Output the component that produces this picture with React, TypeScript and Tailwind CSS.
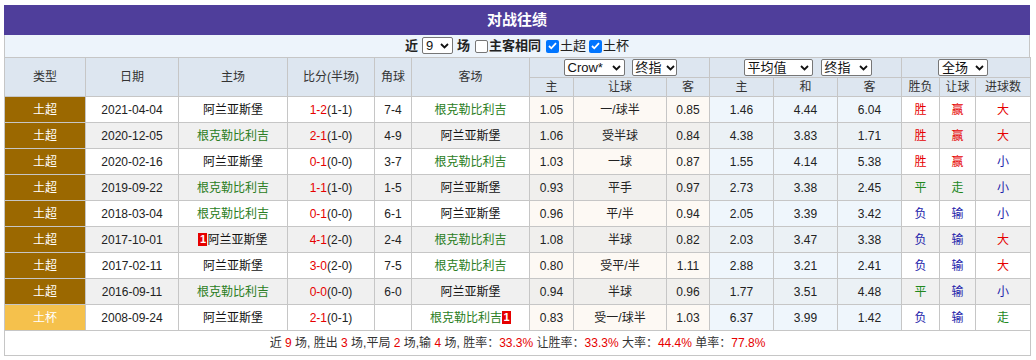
import React from "react";

type Row = {
  type: string;
  date: string;
  home: string;
  homeGreen: boolean;
  homeCard?: boolean;
  score: string;
  half: string;
  corner: string;
  away: string;
  awayCard?: boolean;
  o: [string, string, string];
  a: [string, string, string];
  res: [string, string, string];
};

const A = "阿兰亚斯堡";
const G = "根克勒比利吉";

const rows: Row[] = [
  { type: "土超", date: "2021-04-04", home: A, homeGreen: false, score: "1-2", half: "(1-1)", corner: "7-4", away: G, o: ["1.05", "一/球半", "0.85"], a: ["1.46", "4.44", "6.04"], res: ["胜", "赢", "大"] },
  { type: "土超", date: "2020-12-05", home: G, homeGreen: true, score: "2-1", half: "(1-0)", corner: "4-9", away: A, o: ["1.06", "受半球", "0.84"], a: ["4.38", "3.83", "1.71"], res: ["胜", "赢", "大"] },
  { type: "土超", date: "2020-02-16", home: A, homeGreen: false, score: "0-1", half: "(0-0)", corner: "3-7", away: G, o: ["1.03", "一球", "0.87"], a: ["1.55", "4.14", "5.38"], res: ["胜", "赢", "小"] },
  { type: "土超", date: "2019-09-22", home: G, homeGreen: true, score: "1-1", half: "(1-0)", corner: "1-5", away: A, o: ["0.93", "平手", "0.97"], a: ["2.73", "3.38", "2.45"], res: ["平", "走", "小"] },
  { type: "土超", date: "2018-03-04", home: G, homeGreen: true, score: "0-1", half: "(0-0)", corner: "6-1", away: A, o: ["0.96", "平/半", "0.94"], a: ["2.05", "3.39", "3.42"], res: ["负", "输", "小"] },
  { type: "土超", date: "2017-10-01", home: A, homeGreen: false, homeCard: true, score: "4-1", half: "(2-0)", corner: "2-4", away: G, o: ["1.08", "半球", "0.82"], a: ["2.03", "3.47", "3.38"], res: ["负", "输", "大"] },
  { type: "土超", date: "2017-02-11", home: A, homeGreen: false, score: "3-0", half: "(2-0)", corner: "7-5", away: G, o: ["0.80", "受平/半", "1.11"], a: ["2.88", "3.21", "2.41"], res: ["负", "输", "大"] },
  { type: "土超", date: "2016-09-11", home: G, homeGreen: true, score: "0-0", half: "(0-0)", corner: "6-0", away: A, o: ["0.94", "半球", "0.96"], a: ["1.77", "3.51", "4.48"], res: ["平", "输", "小"] },
  { type: "土杯", date: "2008-09-24", home: A, homeGreen: false, score: "2-1", half: "(0-1)", corner: "", away: G, awayCard: true, o: ["0.83", "受一/球半", "1.03"], a: ["6.37", "3.99", "1.42"], res: ["负", "输", "走"] },
];

const resColor = (r: string) => {
  if (r === "胜" || r === "赢" || r === "大") return "text-[#e60000]";
  if (r === "平" || r === "走") return "text-[#22881e]";
  return "text-[#1c1caa]";
};

const Chevron = () => (
  <svg width="9" height="6" viewBox="0 0 9 6" className="ml-[4px] shrink-0">
    <path d="M1 1l3.5 3.5L8 1" fill="none" stroke="#111" strokeWidth="1.8" />
  </svg>
);

const Select = ({ label, w }: { label: string; w: string }) => (
  <span
    className={`inline-flex items-center justify-between h-[17px] ${w} border border-[#767676] bg-white px-[3px] text-[13px] leading-none text-[#111] rounded-[2px] whitespace-nowrap`}
  >
    <span>{label}</span>
    <Chevron />
  </span>
);

const Check = ({ on }: { on: boolean }) =>
  on ? (
    <span className="inline-flex items-center justify-center w-[13px] h-[13px] bg-[#0075ff] rounded-[2px] mr-[1px] ml-[3px]">
      <svg width="9" height="8" viewBox="0 0 9 8">
        <path d="M1 4l2.3 2.3L8 1.2" fill="none" stroke="#fff" strokeWidth="1.8" />
      </svg>
    </span>
  ) : (
    <span className="inline-block w-[13px] h-[13px] border border-[#767676] bg-white rounded-[2px] mr-[1px] ml-[3px]" />
  );

const Card = () => (
  <span className="inline-flex items-center justify-center w-[9px] h-[13px] bg-[#e60000] text-white text-[11px] font-bold leading-none">
    1
  </span>
);

const td = "border border-[#c6c6c6] text-center p-0";

export default function App() {
  return (
    <div
      className="w-[1026px] ml-[4px] mt-[5px] text-[12px] text-[#222]"
      style={{ fontFamily: '"Liberation Sans", "Noto Sans CJK SC", sans-serif' }}
    >
      <div className="h-[30px] bg-[#4f3e9b] flex items-center justify-center text-white text-[15px] font-bold">
        对战往绩
      </div>
      <div className="h-[22px] bg-[#edf4fb] border-x border-[#c6c6c6] flex items-center justify-center text-[13px] text-[#222]">
        <span className="font-bold">近</span>
        <span className="mx-[4px]">
          <Select label="9" w="w-[31px]" />
        </span>
        <span className="font-bold mr-[2px]">场</span>
        <Check on={false} />
        <span className="font-bold mr-[2px]">主客相同</span>
        <Check on={true} />
        <span>土超</span>
        <Check on={true} />
        <span>土杯</span>
      </div>
      <table className="w-[1026px] border-collapse table-fixed">
        <colgroup>
          <col className="w-[81px]" />
          <col className="w-[93px]" />
          <col className="w-[109px]" />
          <col className="w-[87px]" />
          <col className="w-[37px]" />
          <col className="w-[118px]" />
          <col className="w-[44px]" />
          <col className="w-[93px]" />
          <col className="w-[43px]" />
          <col className="w-[64px]" />
          <col className="w-[64px]" />
          <col className="w-[64px]" />
          <col className="w-[38px]" />
          <col className="w-[36px]" />
          <col className="w-[55px]" />
        </colgroup>
        <thead className="bg-[#dde6f0] text-[#333]">
          <tr className="h-[20px]">
            <th rowSpan={2} className={`${td} font-normal`}>类型</th>
            <th rowSpan={2} className={`${td} font-normal`}>日期</th>
            <th rowSpan={2} className={`${td} font-normal`}>主场</th>
            <th rowSpan={2} className={`${td} font-normal`}>比分(半场)</th>
            <th rowSpan={2} className={`${td} font-normal`}>角球</th>
            <th rowSpan={2} className={`${td} font-normal`}>客场</th>
            <th colSpan={3} className={`${td} font-normal`}>
              <div className="flex items-center justify-center gap-[7px] pl-[1px]">
                <Select label="Crow*" w="w-[61px]" />
                <Select label="终指" w="w-[45px]" />
              </div>
            </th>
            <th colSpan={3} className={`${td} font-normal`}>
              <div className="flex items-center justify-center gap-[8px] pl-[4px]">
                <Select label="平均值" w="w-[69px]" />
                <Select label="终指" w="w-[51px]" />
              </div>
            </th>
            <th colSpan={3} className={`${td} font-normal`}>
              <div className="flex items-center justify-center pr-[6px]">
                <Select label="全场" w="w-[50px]" />
              </div>
            </th>
          </tr>
          <tr className="h-[19px]">
            {["主", "让球", "客", "主", "和", "客", "胜负", "让球", "进球数"].map((h, i) => (
              <th key={i} className={`${td} font-normal`}>{h}</th>
            ))}
          </tr>
        </thead>
        <tbody>
          {rows.map((r, i) => {
            const even = i % 2 === 1;
            const base = even ? "bg-[#f0f0f0]" : "bg-white";
            const oBg = even ? "bg-[#f0efed]" : "bg-[#fdf9f4]";
            const aBg = even ? "bg-[#ebf1f5]" : "bg-[#eff6fc]";
            return (
              <tr key={i} className={`h-[26px] ${base}`}>
                <td className={`${td} text-white ${r.type === "土杯" ? "bg-[#f5c14c]" : "bg-[#9b6800]"}`}>{r.type}</td>
                <td className={td}>{r.date}</td>
                <td className={`${td} ${r.homeGreen ? "text-[#2a7d22]" : "text-[#111]"}`}>
                  <span className="inline-flex items-center">
                    {r.homeCard && <Card />}
                    {r.home}
                  </span>
                </td>
                <td className={td}>
                  <span className="text-[#e60000]">{r.score}</span>
                  {r.half}
                </td>
                <td className={td}>{r.corner}</td>
                <td className={`${td} ${r.homeGreen ? "text-[#111]" : "text-[#2a7d22]"}`}>
                  <span className="inline-flex items-center">
                    {r.away}
                    {r.awayCard && <Card />}
                  </span>
                </td>
                {r.o.map((v, j) => (
                  <td key={"o" + j} className={`${td} ${oBg}`}>{v}</td>
                ))}
                {r.a.map((v, j) => (
                  <td key={"a" + j} className={`${td} ${aBg}`}>{v}</td>
                ))}
                {r.res.map((v, j) => (
                  <td key={"r" + j} className={`${td} ${resColor(v)}`}>{v}</td>
                ))}
              </tr>
            );
          })}
          <tr className="h-[25px] bg-white">
            <td colSpan={15} className={`${td} text-[#333]`}>
              近 <span className="text-[#e60000]">9</span> 场, 胜出 <span className="text-[#e60000]">3</span> 场,平局{" "}
              <span className="text-[#e60000]">2</span> 场,输 <span className="text-[#e60000]">4</span> 场, 胜率：
              <span className="text-[#e60000]">33.3%</span> 让胜率：<span className="text-[#e60000]">33.3%</span> 大率：
              <span className="text-[#e60000]">44.4%</span> 单率：<span className="text-[#e60000]">77.8%</span>
            </td>
          </tr>
        </tbody>
      </table>
    </div>
  );
}
